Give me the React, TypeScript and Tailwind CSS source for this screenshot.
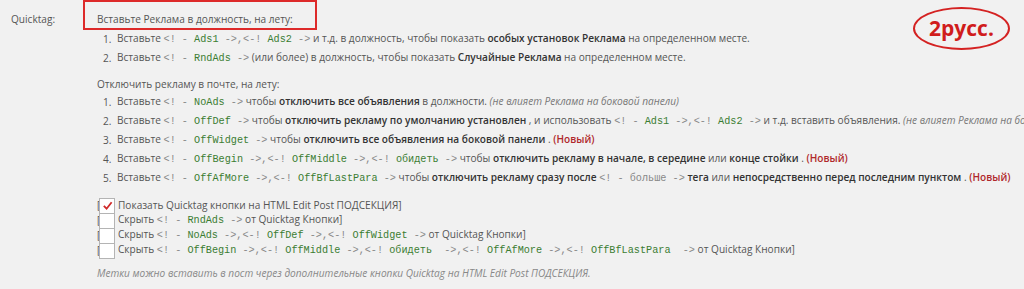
const sans = { fontFamily: '"Open Sans", "Noto Sans", sans-serif' };
const mono = { fontFamily: '"Liberation Mono", "DejaVu Sans Mono", monospace' };

function C({ children }: { children: React.ReactNode }) {
  return (
    <span className="whitespace-pre text-[10.2px] text-[#3b7d32]" style={mono}>
      {children}
    </span>
  );
}

function P({ children }: { children: React.ReactNode }) {
  return (
    <span className="whitespace-pre text-[10.2px] text-[#888]" style={mono}>
      {children}
    </span>
  );
}

function Tag({ name }: { name: string }) {
  return (
    <>
      <P>{"<! - "}</P>
      <C>{name}</C>
      <P>{" ->"}</P>{" "}
    </>
  );
}

// wide: names that get a double space before the arrow (as in the checkbox list)
function Tags({ names, wide = [] }: { names: string[]; wide?: string[] }) {
  return (
    <>
      <P>{"<! - "}</P>
      {names.map((n, i) => (
        <span key={n}>
          {i > 0 && <P>{",<-! "}</P>}
          <C>{n}</C>
          <P>{wide.includes(n) ? "  ->" : " ->"}</P>
        </span>
      ))}{" "}
    </>
  );
}

function Item({ n, children }: { n: number; children: React.ReactNode }) {
  return (
    <li className="flex h-[19px] items-center whitespace-nowrap">
      <span className="w-[20px] shrink-0 pl-[6px]">{n}.</span>
      <span>{children}</span>
    </li>
  );
}

function New() {
  return <b className="font-semibold text-[#b0282b]"> (Новый)</b>;
}

function B({ children }: { children: React.ReactNode }) {
  return <b className="font-semibold text-[#333]">{children}</b>;
}

function Box({ checked }: { checked?: boolean }) {
  return (
    <span className="relative -ml-[1px] mr-[3px] inline-flex h-[16px] w-[16px] shrink-0 items-center justify-center border border-[#b4b4b4] bg-white">
      {checked && (
        <svg width="11" height="11" viewBox="0 0 12 12">
          <path d="M2 6.5 L5 9.5 L10.5 2.5" fill="none" stroke="#d02a2a" strokeWidth="2" />
        </svg>
      )}
    </span>
  );
}

function Row({ checked, children }: { checked?: boolean; children: React.ReactNode }) {
  return (
    <div className="flex h-[15px] items-center whitespace-nowrap">
      <span className="w-[3px] shrink-0">[</span>
      <Box checked={checked} />
      <span>{children}</span>
    </div>
  );
}

export default function App() {
  return (
    <div className="relative h-[289px] w-[1024px] overflow-hidden bg-[#f1f1f1] text-[10.1px] text-[#555]" style={sans}>
      <div className="flex pt-[11px]">
        <div className="w-[97px] shrink-0 pl-[11px]">
          <div className="flex h-[17px] items-center">Quicktag:</div>
        </div>
        <div className="min-w-0 flex-1">
          <div className="flex h-[17px] items-center">Вставьте Реклама в должность, на лету:</div>
          <ol className="mt-[2px]">
            <Item n={1}>
              Вставьте <Tags names={["Ads1", "Ads2"]} />и т.д. в должность, чтобы показать <B>особых установок Реклама</B> на
              определенном месте.
            </Item>
            <Item n={2}>
              Вставьте <Tag name="RndAds" />(или более) в должность, чтобы показать <B>Случайные Реклама</B> на определенном
              месте.
            </Item>
          </ol>
          <div className="mt-[8px] flex h-[17px] items-center">Отключить рекламу в почте, на лету:</div>
          <ol>
            <Item n={1}>
              Вставьте <Tag name="NoAds" />чтобы <B>отключить все объявления</B> в должности.{" "}
              <i className="text-[#777]">(не влияет Реклама на боковой панели)</i>
            </Item>
            <Item n={2}>
              Вставьте <Tag name="OffDef" />чтобы <B>отключить рекламу по умолчанию установлен</B> , и использовать{" "}
              <Tags names={["Ads1", "Ads2"]} />и т.д. вставить объявления.{" "}
              <i className="text-[#777]">(не влияет Реклама на боковой панели)</i>
            </Item>
            <Item n={3}>
              Вставьте <Tag name="OffWidget" />чтобы <B>отключить все объявления на боковой панели</B> .<New />
            </Item>
            <Item n={4}>
              Вставьте <Tags names={["OffBegin", "OffMiddle", "обидеть"]} />чтобы{" "}
              <B>отключить рекламу в начале, в середине</B> или <B>конце стойки</B> .<New />
            </Item>
            <Item n={5}>
              Вставьте <Tags names={["OffAfMore", "OffBfLastPara"]} />чтобы <B>отключить рекламу сразу после</B>{" "}
              <P>{"<! - больше ->"}</P> <B>тега</B> или <B>непосредственно перед последним пунктом</B> .<New />
            </Item>
          </ol>
          <div className="mt-[10px]">
            <Row checked>Показать Quicktag кнопки на HTML Edit Post ПОДСЕКЦИЯ]</Row>
            <Row>
              Скрыть <Tag name="RndAds" />от Quicktag Кнопки]
            </Row>
            <Row>
              Скрыть <Tags names={["NoAds", "OffDef", "OffWidget"]} />от Quicktag Кнопки]
            </Row>
            <Row>
              Скрыть{" "}
              <Tags
                names={["OffBegin", "OffMiddle", "обидеть", "OffAfMore", "OffBfLastPara"]}
                wide={["обидеть", "OffBfLastPara"]}
              />
              от Quicktag Кнопки]
            </Row>
          </div>
          <div className="mt-[7px] flex h-[17px] items-center italic text-[#888]">
            Метки можно вставить в пост через дополнительные кнопки Quicktag на HTML Edit Post ПОДСЕКЦИЯ.
          </div>
        </div>
      </div>

      <div className="absolute left-[83px] top-0 h-[30px] w-[234px] border-2 border-[#dd2a2a]" />
      <div className="absolute left-[913px] top-[7px] flex h-[43px] w-[97px] items-center justify-center rounded-[50%] border-2 border-[#d42222]">
        <span className="text-[21px] font-bold leading-none text-[#d01c1c]">2русс.</span>
      </div>
    </div>
  );
}
